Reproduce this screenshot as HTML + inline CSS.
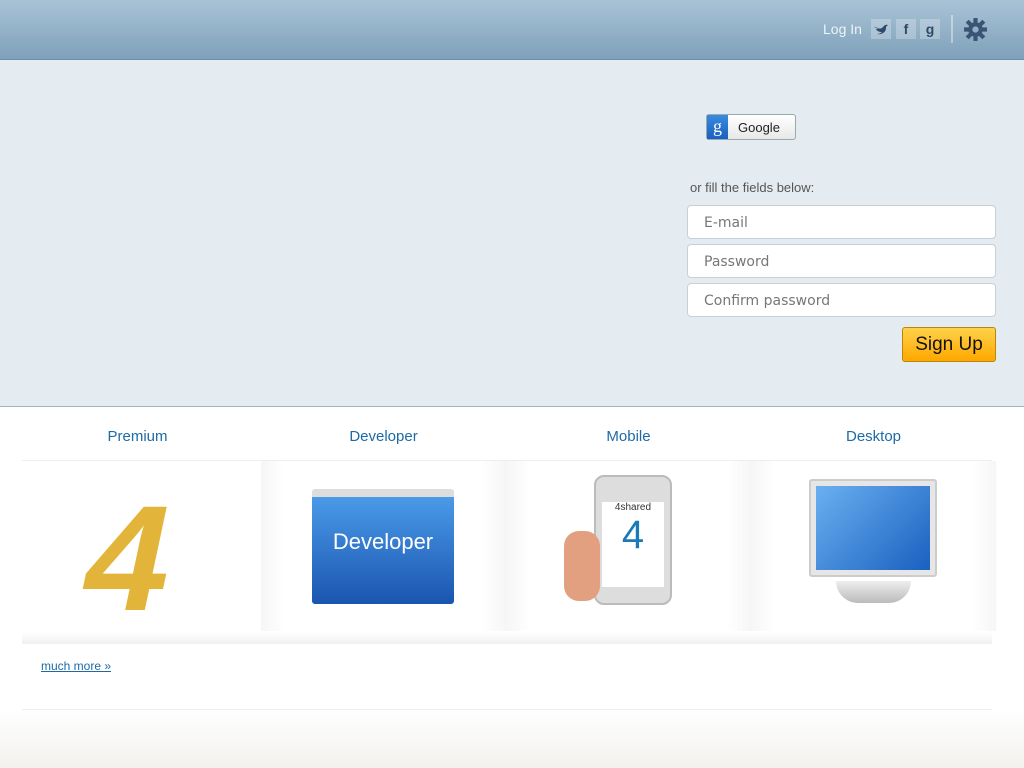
<!DOCTYPE html>
<html><head><meta charset="utf-8"><style>
*{margin:0;padding:0;box-sizing:border-box}
body{width:1024px;height:768px;overflow:hidden;font-family:"Liberation Sans",sans-serif;background:#fff;position:relative}
.hdr{position:absolute;left:0;top:0;width:1024px;height:60px;background:linear-gradient(#a9c3d6,#7fa1ba);border-bottom:1px solid #6d8ea7}
.login{position:absolute;left:823px;top:21px;color:#eef4f8;font-size:14px}
.sb{position:absolute;top:19px;width:20px;height:20px;background:rgba(255,255,255,.25);color:#2f4a6a;font-weight:bold;font-size:14px;text-align:center;line-height:20px}
.hero{position:absolute;left:0;top:60px;width:1024px;height:347px;background:#e4ecf2;border-bottom:1px solid #9db5c7}
.gbtn{position:absolute;left:706px;top:114px;width:90px;height:26px;border:1px solid #9aa;border-radius:3px;background:linear-gradient(#fff,#e8e8e8);font-size:13px;color:#222}
.gbtn i{position:absolute;left:0;top:0;width:21px;height:24px;background:linear-gradient(#3a8ae0,#1a5fc0);color:#fff;font-style:normal;font-family:"Liberation Serif",serif;font-size:18px;text-align:center;line-height:22px}
.gbtn span{position:absolute;left:31px;top:5px}
.or{position:absolute;left:690px;top:180px;font-size:13px;color:#555}
.in{position:absolute;left:687px;width:309px;height:34px;background:#fff;border:1px solid #c5d0d8;border-radius:4px;color:#777;padding:9px 0 0 16px;font-family:"DejaVu Sans",sans-serif;font-size:14px}
.su{position:absolute;left:902px;top:327px;width:94px;height:35px;border:1px solid #b8860b;border-radius:3px;background:linear-gradient(#ffd24a,#ffa800);font-size:19px;color:#111;text-align:center;line-height:33px}
.tab{position:absolute;top:428px;font-size:15px;color:#1d6aa5;text-align:center;width:245px}
.line{position:absolute;left:22px;width:970px;height:1px;background:#eee}
.cell{position:absolute;top:461px;width:245px;height:170px}
.g{background:linear-gradient(90deg,#f6f6f6,#fff 10%,#fff 90%,#f6f6f6)}
.more{position:absolute;left:41px;top:659px;font-size:12px;color:#1d6aa5;text-decoration:underline}
.foot{position:absolute;left:0;top:710px;width:1024px;height:58px;background:linear-gradient(#fff,#f2f1ee)}
</style></head><body>
<div class="hdr">
<div class="login">Log In</div>
<div class="sb" style="left:871px"><svg width="16" height="12" viewBox="0 0 16 12" style="margin-top:4px"><path d="M1 4c3 2 6 2 8 1 2-2 3-4 6-3-1 1-2 1-2 3 0 4-4 7-9 6 2 0 4-1 5-2-3 0-5-1-6-3 2 0 3 0 3-1-2 0-4-1-5-1z" fill="#2f4a6a"/></svg></div>
<div class="sb" style="left:896px">f</div>
<div class="sb" style="left:920px">g</div>
<div style="position:absolute;left:951px;top:15px;width:2px;height:28px;background:rgba(255,255,255,.4)"></div>
<svg style="position:absolute;left:963px;top:17px" width="25" height="25" viewBox="0 0 24 24"><g fill="#3c5474"><circle cx="12" cy="12" r="7"/><g stroke="#3c5474" stroke-width="4"><line x1="12" y1="1" x2="12" y2="23"/><line x1="1" y1="12" x2="23" y2="12"/><line x1="4" y1="4" x2="20" y2="20"/><line x1="20" y1="4" x2="4" y2="20"/></g></g><circle cx="12" cy="12" r="3" fill="#8fb0c8"/></svg>
</div>
<div class="hero"></div>
<div class="gbtn"><i>g</i><span>Google</span></div>
<div class="or">or fill the fields below:</div>
<div class="in" style="top:205px">E-mail</div>
<div class="in" style="top:244px">Password</div>
<div class="in" style="top:283px">Confirm password</div>
<div class="su">Sign Up</div>

<div class="tab" style="left:15px">Premium</div>
<div class="tab" style="left:261px">Developer</div>
<div class="tab" style="left:506px">Mobile</div>
<div class="tab" style="left:751px">Desktop</div>
<div class="line" style="top:460px"></div>
<div class="cell" style="left:15px;background:#fff"><div style="position:absolute;left:72px;top:22px;font-size:150px;font-weight:bold;color:#e2b53a;line-height:1;transform:skewX(-12deg)">4</div></div>
<div class="cell g" style="left:261px"><div style="position:absolute;left:51px;top:28px;width:142px;height:115px;border-radius:3px;background:linear-gradient(#4a9ae8,#1a55b0);border-top:8px solid #ddd"><div style="color:#fff;font-size:22px;text-align:center;margin-top:32px">Developer</div></div></div>
<div class="cell g" style="left:506px"><div style="position:absolute;left:88px;top:14px;width:78px;height:130px;border-radius:10px;background:#ddd;border:2px solid #bbb"><div style="margin:25px 6px;height:85px;background:#fff;color:#333;font-size:10px;text-align:center">4shared<div style="font-size:40px;color:#1a7ab8">4</div></div></div><div style="position:absolute;left:58px;top:70px;width:36px;height:70px;background:#e3a080;border-radius:15px"></div></div>
<div class="cell g" style="left:751px"><div style="position:absolute;left:58px;top:18px;width:128px;height:98px;background:#e6e6e6;border:2px solid #ccc;border-radius:3px"><div style="margin:5px;height:84px;background:linear-gradient(135deg,#6ab0f0,#1a60c0)"></div></div><div style="position:absolute;left:85px;top:120px;width:75px;height:22px;background:linear-gradient(#eee,#bbb);border-radius:0 0 30px 30px"></div></div>
<div style="position:absolute;left:22px;top:632px;width:970px;height:12px;background:linear-gradient(#fff,#f0f0f0)"></div>
<div class="more">much more »</div>
<div class="line" style="top:709px"></div>
<div class="foot"></div>
</body></html>
